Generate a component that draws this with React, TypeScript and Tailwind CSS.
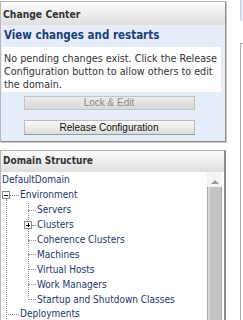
const font = "font-['Tahoma','DejaVu_Sans',sans-serif] font-stretch-condensed";

function TreeRow({ indent, dash, label, box }: { indent: number; dash: number; label: string; box?: "plus" | "minus" }) {
  return (
    <div className="flex h-[14.9px] items-center">
      <div style={{ width: indent }} className="shrink-0" />
      {box && (
        <span className="relative z-10 flex h-[8px] w-[8px] shrink-0 items-center justify-center border border-[#8a8a8a] bg-white">
          <span className="absolute h-[1px] w-[4px] bg-black" />
          {box === "plus" && <span className="absolute h-[4px] w-[1px] bg-black" />}
        </span>
      )}
      <span style={{ width: dash }} className="shrink-0 border-t border-dotted border-[#8a8a8a]" />
      <span className="ml-[1px] whitespace-nowrap leading-none text-[#23376b]">{label}</span>
    </div>
  );
}

export default function App() {
  return (
    <div className={`flex h-[320px] w-[243px] overflow-hidden bg-white text-[10px] ${font}`}>
      <div className="flex w-[228px] shrink-0 flex-col">
        {/* Change Center */}
        <section className="mt-[1px] w-[226px] border border-[#b8b8b8] border-r-[#8c8c8c] border-b-[#8c8c8c] bg-[#e5edf9] shadow-[1px_1px_0_#c8c8c8]">
          <h2 className="h-[23px] bg-gradient-to-b from-[#fdfdfd] to-[#dedede] pl-[2px] text-[10.3px] font-bold leading-[24px] text-[#333]">
            Change Center
          </h2>
          <div className="flex h-[22px] items-center pl-[3px] text-[11.5px] font-bold text-[#1c3f7c]">
            View changes and restarts
          </div>
          <p className="ml-[1px] mr-[4px] h-[45px] whitespace-nowrap bg-white pl-[2px] pt-[5px] text-[10.7px] leading-[13px] text-[#333]">
            No pending changes exist. Click the Release
            <br />
            Configuration button to allow others to edit
            <br />
            the domain.
          </p>
          <div className="flex flex-col items-center gap-[10px] pb-[6px] pt-[4px] pr-[8px] font-['Liberation_Sans',Arial,sans-serif] font-stretch-normal">
            <button className="h-[14px] w-[171px] border border-[#c4c4c4] bg-gradient-to-b from-[#ececec] to-[#dadada] text-[10px] leading-[12px] text-[#8c8c8c]">
              Lock &amp; Edit
            </button>
            <button className="h-[15px] w-[171px] border border-[#bcbcbc] border-b-[#9a9a9a] bg-gradient-to-b from-[#fafafa] to-[#dcdcdc] text-[10px] leading-[13px] text-[#111]">
              Release Configuration
            </button>
          </div>
        </section>

        {/* Domain Structure */}
        <section className="mt-[8px] flex w-[226px] flex-1 flex-col border border-b-0 border-r-2 border-[#b8b8b8] border-r-[#8c8c8c] bg-white">
          <h2 className="h-[21px] shrink-0 bg-gradient-to-b from-[#fdfdfd] to-[#dedede] pl-[2px] text-[10px] font-bold leading-[20px] text-[#333]">
            Domain Structure
          </h2>
          <div className="flex flex-1">
            <div className="relative flex-1 pt-[1px]">
              {/* vertical guide lines */}
              <div className="absolute left-[5px] top-[27px] h-[150px] border-l border-dotted border-[#8a8a8a]" />
              <div className="absolute left-[27px] top-[31px] h-[97px] border-l border-dotted border-[#8a8a8a]" />
              <div className="flex h-[14.9px] items-center pl-[1px] leading-none text-[#23376b]">DefaultDomain</div>
              <TreeRow indent={1} dash={9} label="Environment" box="minus" />
              <TreeRow indent={27} dash={8} label="Servers" />
              <TreeRow indent={23} dash={4} label="Clusters" box="plus" />
              <TreeRow indent={27} dash={8} label="Coherence Clusters" />
              <TreeRow indent={27} dash={8} label="Machines" />
              <TreeRow indent={27} dash={8} label="Virtual Hosts" />
              <TreeRow indent={27} dash={8} label="Work Managers" />
              <TreeRow indent={27} dash={8} label="Startup and Shutdown Classes" />
              <TreeRow indent={5} dash={13} label="Deployments" />
            </div>
            <div className="mr-[2px] flex w-[15px] shrink-0 flex-col bg-[#f4f4f4]">
              <div className="flex h-[15px] items-end justify-center pb-[3px]">
                <span className="h-0 w-0 border-x-[4px] border-b-[4px] border-x-transparent border-b-[#9a9a9a]" />
              </div>
              <div className="flex-1 border-x border-[#a8a8a8] bg-[#c4c4c4] shadow-[inset_2px_0_0_#d8d8d8]" />
            </div>
          </div>
        </section>
      </div>

      {/* right sliver of next column */}
      <div className="ml-[12px] flex flex-1 flex-col">
        <div className="h-[21px] border-l border-[#c8d2e0] bg-[#e3ebf7]" />
        <div className="mt-[22px] flex-1 border-l border-t border-[#a8a8a8]" />
      </div>
    </div>
  );
}
